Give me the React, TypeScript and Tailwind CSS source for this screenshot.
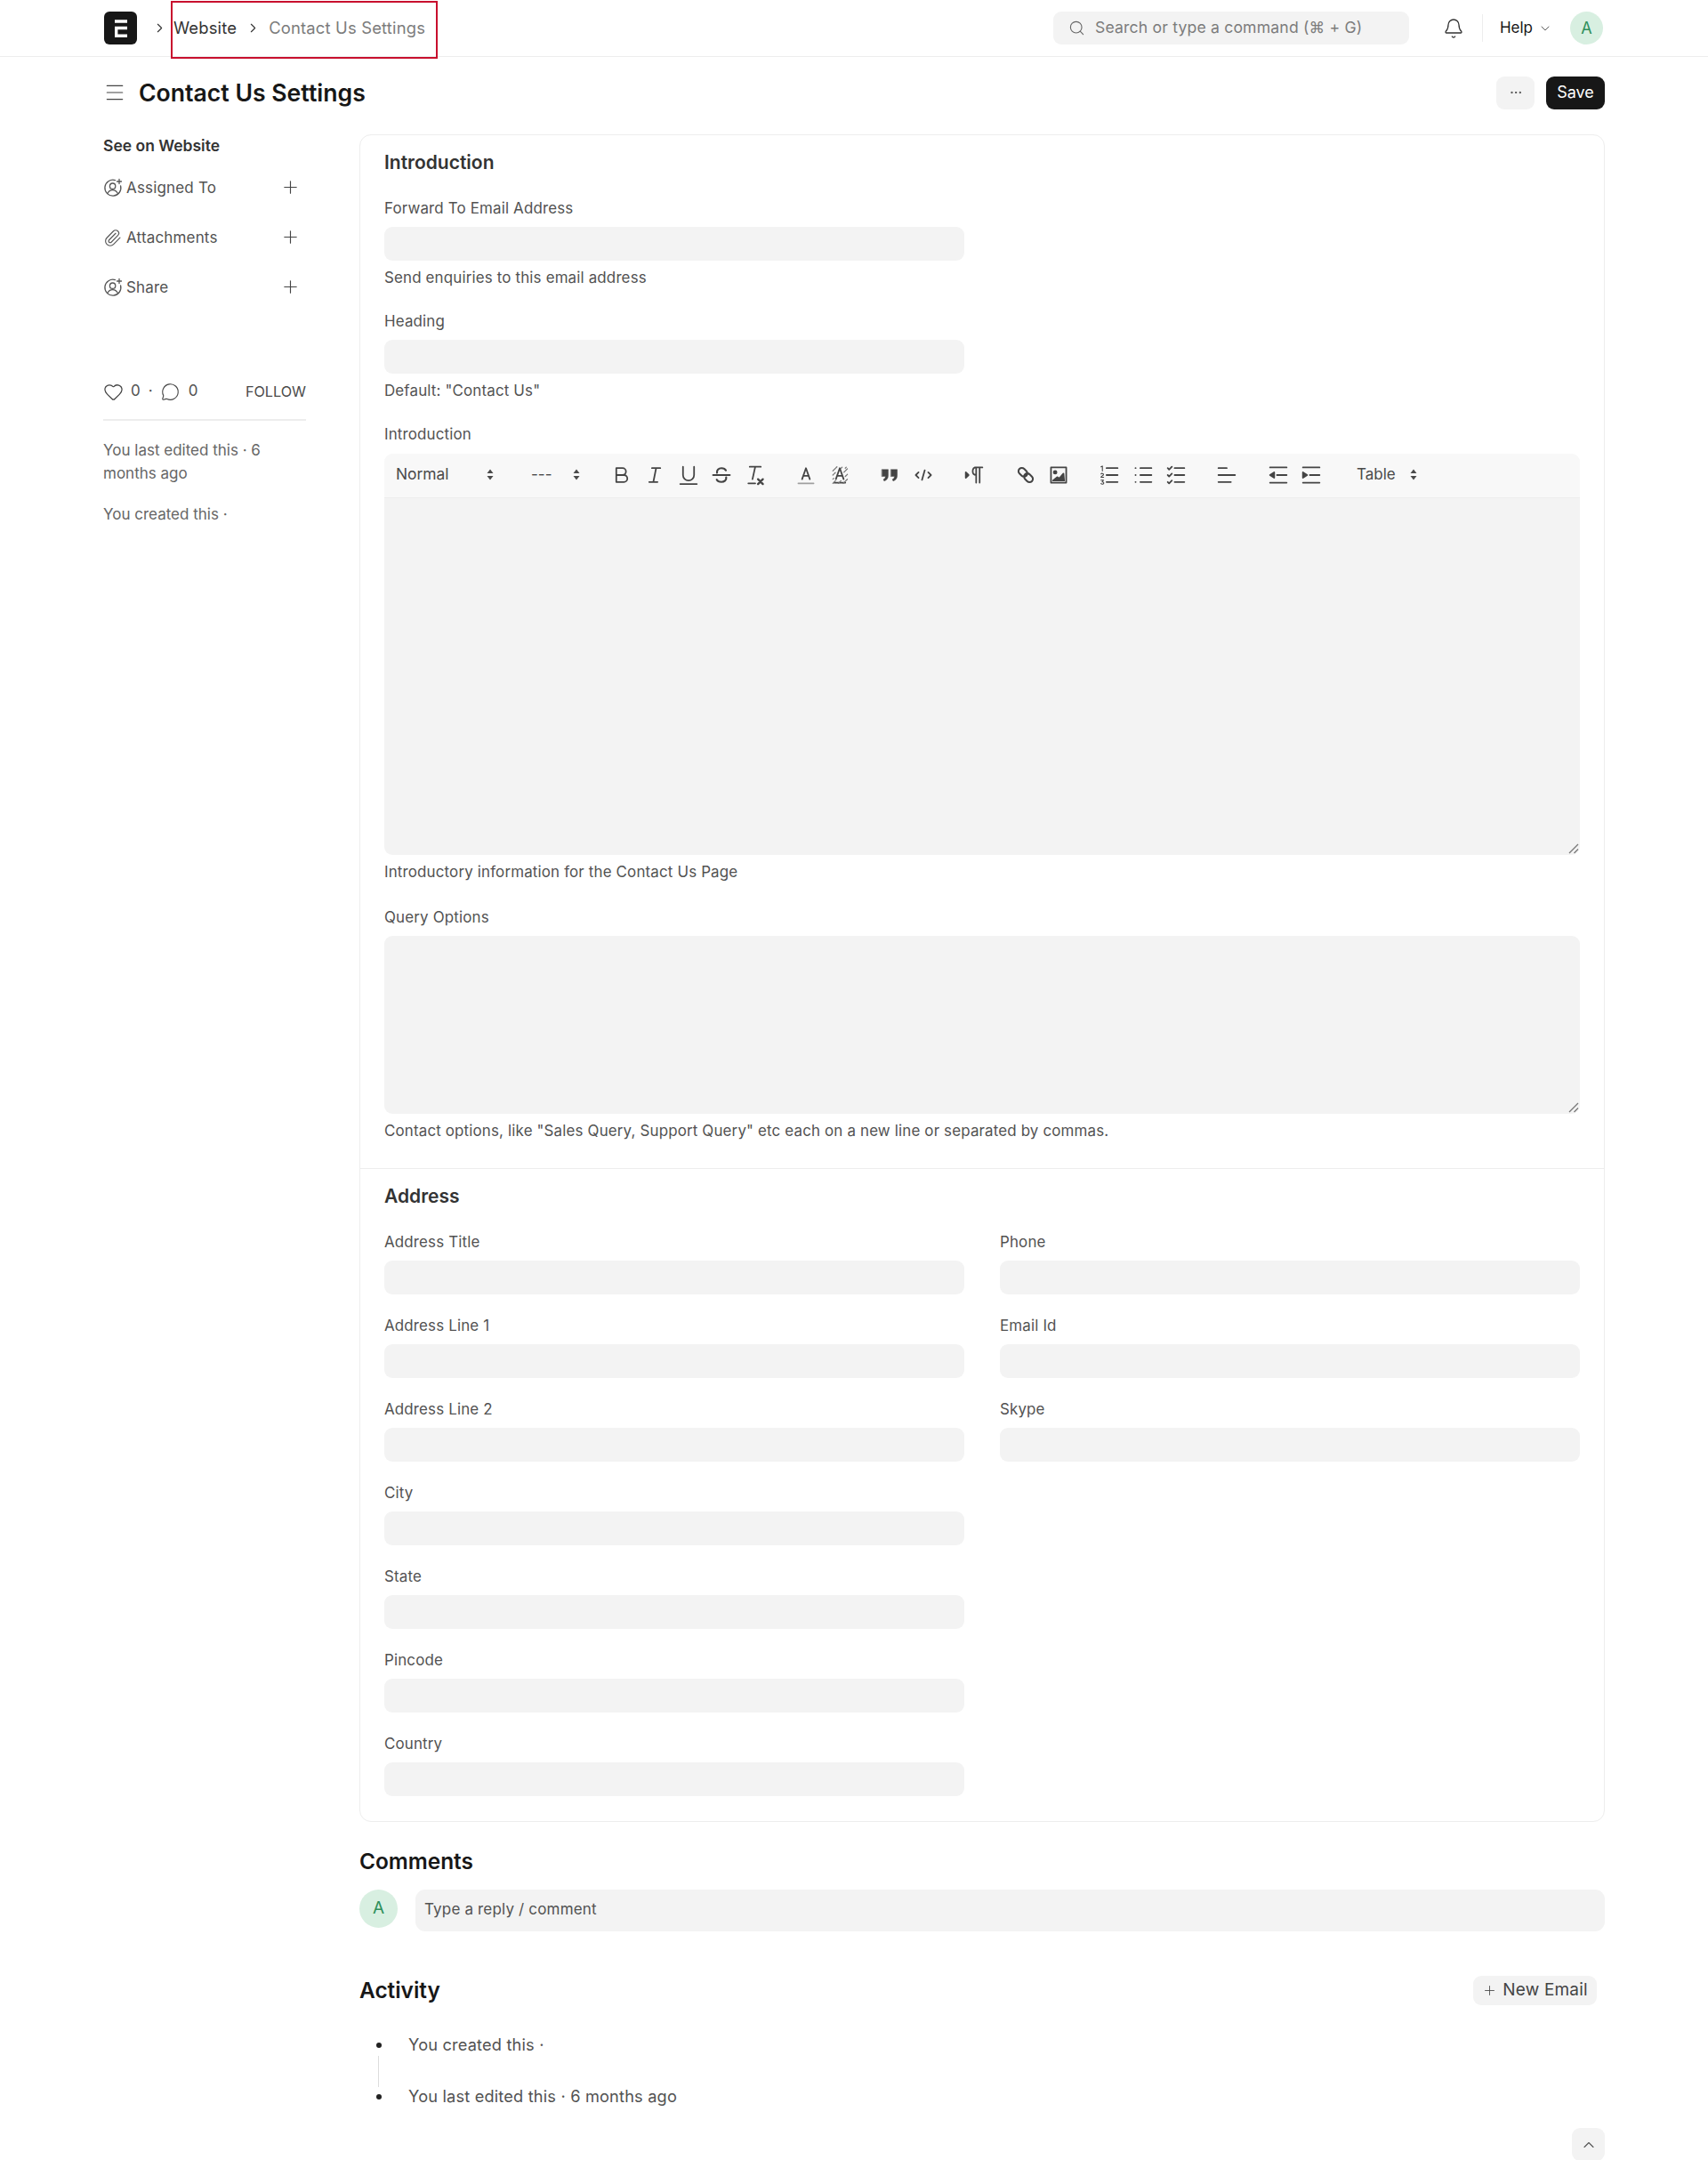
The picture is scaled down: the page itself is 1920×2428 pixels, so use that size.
import React from 'react';
import {
  Search,
  Bell,
  ChevronDown,
  ChevronRight,
  ChevronUp,
  Menu,
  Plus,
  Paperclip,
  Heart,
  MessageCircle,
  Ellipsis,
} from 'lucide-react';

const ink = '#444';

function Field({ label, help }: { label: string; help?: string }) {
  return (
    <div className={help ? 'mb-[25px]' : 'mb-[23px]'}>
      <div className="mb-[9px] h-[24px] text-[16.9px] leading-[24px] tracking-[0.01em] text-[#525252]">{label}</div>
      <div className="h-[38px] rounded-[9px] bg-[#f3f3f3]" />
      {help && <div className="mt-[7px] h-[24px] text-[16.9px] leading-[24px] tracking-[0.01em] text-[#525252]">{help}</div>}
    </div>
  );
}

function AssignIcon() {
  return (
    <svg width="22" height="22" viewBox="0 0 22 22" fill="none" stroke="#555" strokeWidth="1.3" strokeLinecap="round">
      <path d="M13.5 2.6A9 9 0 1 0 19.6 9" />
      <circle cx="10.6" cy="9.2" r="3.2" />
      <path d="M4.8 17.6c1.2-2.6 3.3-4 5.8-4s4.6 1.4 5.8 4" />
      <path d="M18 1.5v5M15.5 4h5" />
    </svg>
  );
}

function SideAction({ icon, label }: { icon: React.ReactNode; label: string }) {
  return (
    <div className="mb-[32px] flex h-[24px] items-center">
      <div className="flex w-[26px] items-center">{icon}</div>
      <span className="w-[173px] pt-[2px] text-[17px] tracking-[0.01em] text-[#525252]">{label}</span>
      <Plus size={23} strokeWidth={1.2} color="#444" className="-mt-[1px]" />
    </div>
  );
}

function Btn({ children }: { children: React.ReactNode }) {
  return (
    <span className="flex h-[28px] w-[37.5px] items-center justify-center">
      <svg width="28" height="28" viewBox="0 0 18 18" fill="none" stroke={ink} strokeWidth="1.15" strokeLinecap="round" strokeLinejoin="round">
        {children}
      </svg>
    </span>
  );
}

function UpDown() {
  return (
    <svg width="8" height="13" viewBox="0 0 8 13" fill="#4a4a4a">
      <path d="M4 0.5 7.5 5H.5zM4 12.5.5 8h7z" />
    </svg>
  );
}

function Toolbar() {
  return (
    <div className="flex h-[50px] items-center rounded-t-[9px] border-b border-[#ededed] bg-[#f8f8f8] pb-[2px]">
      <span className="ml-[13px] w-[102px] text-[17.4px] text-[#4a4a4a]">Normal</span>
      <UpDown />
      <span className="ml-[42px] w-[47px] text-[17px] text-[#4a4a4a]">---</span>
      <UpDown />
      <div className="ml-[28px] flex">
        <Btn>
          <path d="M5 4h4.5a2.5 2.5 0 0 1 0 5H5zM5 9h5.5a2.5 2.5 0 0 1 0 5H5z" />
        </Btn>
        <Btn>
          <path d="M7 4h6M5 14h6M8 14l2-10" />
        </Btn>
        <Btn>
          <path d="M5 3v6a4 4 0 0 0 8 0V3M3 15.5h12" />
        </Btn>
        <Btn>
          <path d="M3 9h12M5.8 7.4C5.4 5.4 7 4 9 4c1.5 0 2.7.6 3.2 1.6M12.4 10.6C12.8 12.8 10.9 14 9 14c-1.6 0-2.9-.6-3.4-1.7" strokeWidth="1.4" />
        </Btn>
        <Btn>
          <path d="M5 3h8M9 3 7 12M4 15h5" />
          <path d="M11 12l3.5 3.5M14.5 12 11 15.5" strokeWidth="1.5" />
        </Btn>
      </div>
      <div className="ml-[20px] flex">
        <Btn>
          <path d="M6.2 12l2.8-8 2.8 8M7.2 9.5h3.6" />
          <path d="M3.5 15h11" stroke="#a0a0a0" />
        </Btn>
        <Btn>
          <path d="M6.2 12l2.8-8 2.8 8M7.2 9.5h3.6M5 14.5h8" />
          <path
            d="M4 6l3-3M4 9l1.8-1.8M4 12l1-1M4 15l2-2M11.5 15l3-3M13 10l1.5-1.5M12 7l2.5-2.5M10 4l1-1M13 4l1-1M8 15l2-2"
            stroke="#777"
            strokeWidth=".8"
            strokeDasharray="1 .6"
          />
        </Btn>
      </div>
      <div className="ml-[19px] flex">
        <Btn>
          <path
            d="M3.5 5H8v4.3c0 2-1 3.4-2.9 4L4.5 12.2c1-.5 1.5-1.2 1.5-2.2H3.5zM10 5h4.5v4.3c0 2-1 3.4-2.9 4L11 12.2c1-.5 1.5-1.2 1.5-2.2H10z"
            fill="#444"
            strokeWidth=".3"
          />
        </Btn>
        <Btn>
          <path d="M5.5 7 3.5 9l2 2M12.5 7l2 2-2 2M10 5.5 8 12.5" />
        </Btn>
      </div>
      <div className="ml-[20px] flex">
        <Btn>
          <path d="M9.5 3.5H15M10.5 3.5V14.5M13 3.5V14.5M10.5 9c-2 0-2.5-1.2-2.5-2.7S8.6 3.5 10.5 3.5" />
          <path d="M3 7l2 2-2 2z" fill="#444" />
        </Btn>
      </div>
      <div className="ml-[20px] flex">
        <Btn>
          <path d="M4.5 4.5a2.4 2.4 0 0 1 3.4 0l1.6 1.6a2.4 2.4 0 0 1-3.4 3.4L4.5 7.9a2.4 2.4 0 0 1 0-3.4zM8.5 8.5a2.4 2.4 0 0 1 3.4 0l1.6 1.6a2.4 2.4 0 0 1-3.4 3.4l-1.6-1.6a2.4 2.4 0 0 1 0-3.4z" strokeWidth="1.3" />
        </Btn>
        <Btn>
          <rect x="3.5" y="3.5" width="11" height="11" />
          <circle cx="6.5" cy="7" r="1" fill="#444" />
          <path d="M5 13l3-2.5 1.5 1L12.5 8l.5 5z" fill="#444" />
        </Btn>
      </div>
      <div className="ml-[19.5px] flex">
        <Btn>
          <path d="M7 4h8M7 9h8M7 14h8" />
          <path d="M3 3l1-.5V6M3 8.2c.4-.6 1.8-.5 1.8.4 0 .7-1.8 1.2-1.8 2h1.9M3 12.7h1.8L3.8 14c.9-.1 1.3.3 1.2.9-.1.8-1.4.9-2 .3" strokeWidth=".7" />
        </Btn>
        <Btn>
          <path d="M7 4h8M7 9h8M7 14h8M3.5 4h.1M3.5 9h.1M3.5 14h.1" />
        </Btn>
        <Btn>
          <path d="M8 4h7M8 9h7M8 14h7M3 4l1 1 2-2M3 9l1 1 2-2M3 14l1 1 2-2" />
        </Btn>
      </div>
      <div className="ml-[19.5px] flex">
        <Btn>
          <path d="M3 4h6M3 9h12M3 14h9" />
        </Btn>
      </div>
      <div className="ml-[20px] flex">
        <Btn>
          <path d="M3 3.5h12M8 9h7M3 14.5h12" />
          <path d="M6 7 3 9l3 2z" fill="#444" />
        </Btn>
        <Btn>
          <path d="M3 3.5h12M8 9h7M3 14.5h12" />
          <path d="M3 7l3 2-3 2z" fill="#444" />
        </Btn>
      </div>
      <span className="ml-[32px] w-[60px] text-[17px] text-[#4a4a4a]">Table</span>
      <UpDown />
    </div>
  );
}

function Resize() {
  return (
    <svg className="absolute bottom-[1px] right-[1px]" width="12" height="12" viewBox="0 0 12 12" stroke="#777" strokeWidth="1.3">
      <path d="M1 11 11 1M6.5 11 11 6.5" />
    </svg>
  );
}

export default function App() {
  return (
    <div className="relative h-[2428px] w-[1920px] overflow-hidden bg-white font-['Inter',sans-serif]">
      {/* Top bar */}
      <div className="flex h-[64px] items-center border-b border-[#ededed] pl-[117px] pr-[118px]">
        <div className="flex h-[37px] w-[37px] items-center justify-center rounded-[6px] bg-[#171717]">
          <svg width="14" height="20" viewBox="0 0 14 20" fill="none" stroke="#fff" strokeWidth="3.4">
            <path d="M0 2h14M14 9.5H1.7v8.8H14" />
          </svg>
        </div>
        <ChevronRight className="ml-[17px]" size={17} strokeWidth={1.6} color="#333" />
        <span className="ml-[7px] text-[18.4px] tracking-[0.01em] text-[#333]">Website</span>
        <ChevronRight className="ml-[10px]" size={17} strokeWidth={1.6} color="#333" />
        <span className="ml-[9px] text-[18.4px] tracking-[0.01em] text-[#7c7c7c]">Contact Us Settings</span>

        <div className="ml-auto flex h-[37px] w-[400px] items-center rounded-[9px] bg-[#f3f3f3] pl-[17px]">
          <Search size={19} strokeWidth={1.4} color="#666" />
          <span className="ml-[11px] text-[17.6px] tracking-[0.01em] text-[#7c7c7c]">Search or type a command (⌘ + G)</span>
        </div>
        <Bell className="ml-[38px]" size={24} strokeWidth={1.3} color="#333" />
        <div className="ml-[20px] h-[31px] w-px bg-[#ededed]" />
        <span className="ml-[19px] text-[17px] text-[#171717]">Help</span>
        <ChevronDown className="ml-[6px]" size={16} strokeWidth={1.3} color="#444" />
        <div className="ml-[20px] flex h-[37px] w-[37px] items-center justify-center rounded-full bg-[#d8efe1] text-[18px] text-[#2f8f5b]">A</div>
      </div>

      <div className="px-[116px]">
        {/* Page head */}
        <div className="flex h-[87px] items-center pb-[7px]">
          <Menu size={26} strokeWidth={1.15} color="#444" className="mr-[14px]" />
          <h1 className="mt-[1px] text-[26.6px] font-semibold text-[#171717]">Contact Us Settings</h1>
          <div className="ml-auto flex h-[37px] w-[43px] items-center justify-center rounded-[9px] bg-[#f3f3f3]">
            <Ellipsis size={16} strokeWidth={1.5} color="#444" />
          </div>
          <div className="ml-[13px] flex h-[37px] w-[66px] items-center justify-center rounded-[9px] bg-[#171717] pb-[1px] text-[18px] text-white">Save</div>
        </div>

        <div className="flex">
          {/* Sidebar */}
          <div className="w-[228px] shrink-0">
            <div className="mt-[1px] h-[24px] text-[17.5px] font-semibold leading-[24px] text-[#333]">See on Website</div>
            <div className="mt-[23px]">
              <SideAction icon={<AssignIcon />} label="Assigned To" />
              <SideAction icon={<Paperclip size={21} strokeWidth={1.3} color="#555" />} label="Attachments" />
              <SideAction icon={<AssignIcon />} label="Share" />
            </div>
            <div className="mt-[93px] flex h-[24px] items-center text-[17px] text-[#525252]">
              <Heart size={23} strokeWidth={1.3} color="#444" />
              <span className="ml-[8px]">0</span>
              <span className="ml-[9px]">·</span>
              <MessageCircle className="ml-[9px]" size={21} strokeWidth={1.3} color="#444" />
              <span className="ml-[10px]">0</span>
              <span className="ml-auto text-[16.2px] text-[#4a4a4a]">FOLLOW</span>
            </div>
            <div className="mt-[19px] h-[2px] bg-[#ededed]" />
            <div className="mt-[20px] text-[17px] leading-[26px] text-[#666]">You last edited this · 6 months ago</div>
            <div className="mt-[20px] text-[17px] leading-[26px] text-[#666]">You created this ·</div>
          </div>

          {/* Form */}
          <div className="ml-[60px] min-w-0 flex-1">
            <div className="rounded-[13px] border border-[#ededed]">
              <div className="border-b border-[#ededed] px-[27px] pt-[17px]">
                <h2 className="mb-[25px] h-[28px] text-[21px] font-semibold leading-[28px] text-[#333]">Introduction</h2>
                <div className="w-[652px]">
                  <Field label="Forward To Email Address" help="Send enquiries to this email address" />
                  <Field label="Heading" help='Default: "Contact Us"' />
                </div>
                <div className="mb-[10px] h-[24px] text-[16.9px] leading-[24px] tracking-[0.01em] text-[#525252]">Introduction</div>
                <Toolbar />
                <div className="relative h-[401px] rounded-b-[9px] bg-[#f3f3f3]">
                  <Resize />
                </div>
                <div className="mb-[26.5px] mt-[7px] h-[24px] text-[16.9px] leading-[24px] tracking-[0.01em] text-[#525252]">Introductory information for the Contact Us Page</div>
                <div className="mb-[9px] h-[24px] text-[16.9px] leading-[24px] tracking-[0.01em] text-[#525252]">Query Options</div>
                <div className="relative h-[200px] rounded-[9px] bg-[#f3f3f3]">
                  <Resize />
                </div>
                <div className="mb-[30.5px] mt-[7px] h-[24px] text-[16.9px] leading-[24px] tracking-[0.01em] text-[#525252]">
                  Contact options, like "Sales Query, Support Query" etc each on a new line or separated by commas.
                </div>
              </div>
              <div className="px-[27px] pt-[17px]">
                <h2 className="mb-[24.5px] h-[28px] text-[21px] font-semibold leading-[28px] text-[#333]">Address</h2>
                <div className="flex gap-[40px]">
                  <div className="w-[652px]">
                    {['Address Title', 'Address Line 1', 'Address Line 2', 'City', 'State', 'Pincode', 'Country'].map((l) => (
                      <Field key={l} label={l} />
                    ))}
                  </div>
                  <div className="w-[652px]">
                    {['Phone', 'Email Id', 'Skype'].map((l) => (
                      <Field key={l} label={l} />
                    ))}
                  </div>
                </div>
                <div className="h-[5px]" />
              </div>
            </div>

            {/* Comments */}
            <h2 className="mt-[28px] h-[32px] text-[24.4px] font-semibold leading-[32px] text-[#171717]">Comments</h2>
            <div className="mt-[16px] flex gap-[20px]">
              <div className="flex h-[43px] w-[43px] shrink-0 items-center justify-center rounded-full bg-[#d8efe1] text-[19px] text-[#2f8f5b]">A</div>
              <div className="flex h-[47px] flex-1 items-center rounded-[11px] bg-[#f3f3f3] pl-[10px] text-[17px] tracking-[0.01em] text-[#525252]">Type a reply / comment</div>
            </div>

            {/* Activity */}
            <div className="mt-[50px] flex h-[33px] items-center">
              <h2 className="text-[24.4px] font-semibold text-[#171717]">Activity</h2>
              <div className="ml-auto mr-[9px] flex h-[33px] w-[139px] items-center justify-center rounded-[9px] bg-[#f3f3f3] text-[19px] tracking-[0.01em] text-[#444]">
                <Plus size={17} strokeWidth={1.2} color="#444" className="mr-[6px]" />
                New Email
              </div>
            </div>
            <div className="relative mt-[33px] pl-[55px] text-[18.2px] tracking-[0.01em] text-[#525252]">
              <div className="flex h-[24px] items-center">You created this ·</div>
              <div className="mt-[34px] flex h-[24px] items-center">You last edited this · 6 months ago</div>
              <div className="absolute left-[19px] top-[9px] h-[6px] w-[6px] rounded-full bg-[#222]" />
              <div className="absolute left-[21px] top-[24px] h-[35px] w-px bg-[#dcdcdc]" />
              <div className="absolute left-[19px] top-[67px] h-[6px] w-[6px] rounded-full bg-[#222]" />
            </div>
          </div>
        </div>
      </div>

      {/* Scroll to top */}
      <div className="absolute left-[1767px] top-[2392px] flex h-[37px] w-[37px] items-center justify-center rounded-[9px] bg-[#f3f3f3]">
        <ChevronUp size={20} strokeWidth={1.3} color="#555" />
      </div>

      {/* Highlight box around the breadcrumb */}
      <div className="absolute left-[192px] top-[1px] h-[65px] w-[300px] border-[2px] border-[#c8102e]" />
    </div>
  );
}
